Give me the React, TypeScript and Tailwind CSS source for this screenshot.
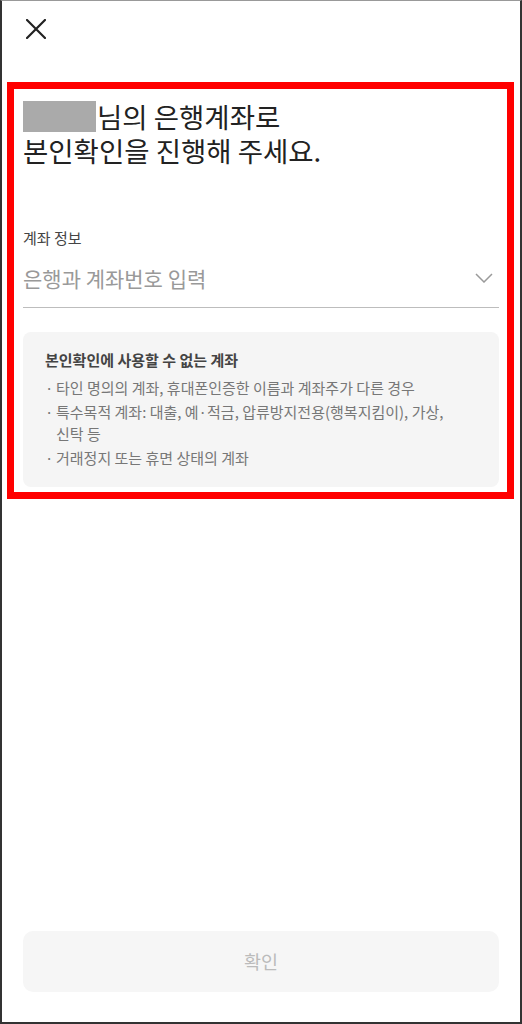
const FONT = "font-['Noto_Sans_CJK_KR','Noto_Sans',sans-serif]";

function CloseIcon() {
  return (
    <svg width="20" height="20" viewBox="0 0 20 20" fill="none">
      <path d="M1 1L19 19M19 1L1 19" stroke="#222" strokeWidth="2.2" strokeLinecap="square" />
    </svg>
  );
}

function ChevronDown() {
  return (
    <svg width="18" height="10" viewBox="0 0 18 10" fill="none">
      <path d="M1 1L9 9L17 1" stroke="#9a9a9a" strokeWidth="1.5" />
    </svg>
  );
}

const notices = [
  '타인 명의의 계좌, 휴대폰인증한 이름과 계좌주가 다른 경우',
  '특수목적 계좌: 대출, 예·적금, 압류방지전용(행복지킴이), 가상, 신탁 등',
  '거래정지 또는 휴면 상태의 계좌',
];

export default function App() {
  return (
    <div
      className={`${FONT} w-[522px] h-[1024px] bg-white flex flex-col border-t border-t-[#999] border-x-2 border-b-2 border-x-[#333] border-b-[#333]`}
    >
      {/* Header */}
      <div className="h-[60px] pl-[24px] pt-[18px]">
        <CloseIcon />
      </div>

      {/* Highlighted content */}
      <div className="mt-[21px] ml-[5px] mr-[6px] border-[7px] border-[#ff0000] pt-[10px] pl-[9px] pr-[8px] pb-[5px]">
        <h1 className="text-[27.5px] leading-[34px] text-[#222]">
          <div className="flex items-center">
            <span className="w-[73px] h-[31px] bg-[#aaaaaa] mr-[1px]" />
            <span>님의 은행계좌로</span>
          </div>
          <div>본인확인을 진행해 주세요.</div>
        </h1>

        <div className="mt-[61px]">
          <div className="text-[15px] leading-[20px] text-[#444]">계좌 정보</div>
          <div className="flex items-center justify-between pt-[16px] pb-[15px] border-b border-[#bdbdbd]">
            <span className="text-[21px] leading-[28px] text-[#999]">은행과 계좌번호 입력</span>
            <span className="mr-[6px]">
              <ChevronDown />
            </span>
          </div>
        </div>

        <div className="mt-[24px] bg-[#f5f5f5] rounded-[8px] pl-[22px] pr-[16px] pt-[17px] pb-[18px]">
          <div className="text-[15px] leading-[22px] font-bold text-[#444]">
            본인확인에 사용할 수 없는 계좌
          </div>
          <ul className="mt-[6px] flex flex-col gap-[2px]">
            {notices.map((n) => (
              <li key={n} className="flex text-[15px] leading-[22px] text-[#777]">
                <span className="w-[11px] shrink-0">·</span>
                <span className="w-[400px]">{n}</span>
              </li>
            ))}
          </ul>
        </div>
      </div>

      {/* Confirm button */}
      <div className="mt-auto px-[21px] pb-[30px]">
        <button
          disabled
          className="w-full h-[61px] rounded-[10px] bg-[#f6f6f6] text-[18.5px] text-[#bbbbbb]"
        >
          확인
        </button>
      </div>
    </div>
  );
}
